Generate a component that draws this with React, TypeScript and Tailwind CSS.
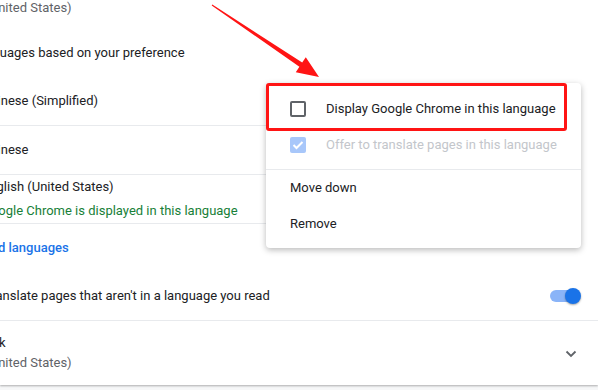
import React from "react";

const font = { fontFamily: "Roboto, 'Liberation Sans', sans-serif" };

function Toggle() {
  return (
    <div className="relative w-[31px] h-[16px]">
      <div className="absolute left-0 top-[2px] h-[12px] w-[28px] rounded-full bg-[#8ab4f8]" />
      <div className="absolute right-0 top-0 h-[16px] w-[16px] rounded-full bg-[#1a73e8] shadow-[0_1px_2px_rgba(0,0,0,0.35)]" />
    </div>
  );
}

export default function App() {
  return (
    <div
      className="relative w-[598px] h-[390px] overflow-hidden bg-[#f6f7f8] text-[13px] text-[#202124]"
      style={font}
    >
      {/* card */}
      <div className="h-[385px] bg-white shadow-[0_1px_2px_rgba(0,0,0,0.3)] overflow-hidden pt-[1px]">
        <div className="ml-[-60px] w-[680px]">
          <div className="h-[14px] flex items-center text-[#5f6368] leading-5">
            English (United States)
          </div>
          <div className="h-[62px] pt-[14px] flex items-center leading-5">
            Order languages based on your preference
          </div>
          <div className="ml-[42px] mr-[45px]">
            <div className="h-[49px] flex items-center border-b border-[#e8eaed]">
              Chinese (Simplified)
            </div>
            <div className="h-[49px] flex items-center border-b border-[#e8eaed]">
              Chinese
            </div>
            <div className="h-[49px] flex flex-col justify-center border-b border-[#e8eaed] leading-[24px]">
              <div>English (United States)</div>
              <div className="text-[#188038]">Google Chrome is displayed in this language</div>
            </div>
            <div className="h-[48px] flex items-center font-medium text-[#1a73e8]">
              Add languages
            </div>
          </div>
          <div className="h-[49px] flex items-center justify-between border-b border-[#e8eaed] pr-[39px]">
            <span>Offer to translate pages that aren't in a language you read</span>
            <Toggle />
          </div>
          <div className="h-[64px] flex items-center justify-between pr-[43px]">
            <div className="flex flex-col leading-5">
              <span>Spell check</span>
              <span className="text-[#5f6368]">English (United States)</span>
            </div>
            <svg width="12" height="8" viewBox="0 0 12 8" className="mt-[2px]">
              <path d="M1.5 1.5 L6 6 L10.5 1.5" fill="none" stroke="#5f6368" strokeWidth="1.8" />
            </svg>
          </div>
        </div>
      </div>

      {/* menu */}
      <div className="absolute left-[266px] top-[83px] w-[315px] rounded-[4px] bg-white pt-[8px] pb-[6px] shadow-[0_2px_6px_rgba(0,0,0,0.28)]">
        <div className="h-[36px] flex items-center pl-[24px]">
          <div className="w-[16px] h-[16px] rounded-[2px] border-2 border-[#5f6368]" />
          <span className="ml-[20px]">Display Google Chrome in this language</span>
        </div>
        <div className="h-[36px] flex items-center pl-[24px]">
          <div className="w-[16px] h-[16px] rounded-[2px] bg-[#a8c7fa] flex items-center justify-center">
            <svg width="12" height="10" viewBox="0 0 12 10">
              <path d="M1.5 5 L4.5 8 L10.5 2" fill="none" stroke="#ffffff" strokeWidth="2" />
            </svg>
          </div>
          <span className="ml-[20px] text-[#c3c6cb]">Offer to translate pages in this language</span>
        </div>
        <div className="mt-[6px] h-px bg-[#e8eaed]" />
        <div className="h-[36px] flex items-center pl-[24px]">Move down</div>
        <div className="h-[36px] flex items-center pl-[24px]">Remove</div>
      </div>

      {/* annotation box */}
      <div className="absolute left-[266px] top-[83px] w-[301px] h-[48px] rounded-[3px] border-[3px] border-[#ff1414]" />

      {/* annotation arrow */}
      <svg className="absolute left-0 top-0" width="598" height="390" viewBox="0 0 598 390">
        <polygon
          points="211.7,5.4 299.4,66.8 295.8,72.2 319,77 305.8,57.2 302.2,62.6 212.3,4.6"
          fill="#ff1414"
        />
      </svg>
    </div>
  );
}
